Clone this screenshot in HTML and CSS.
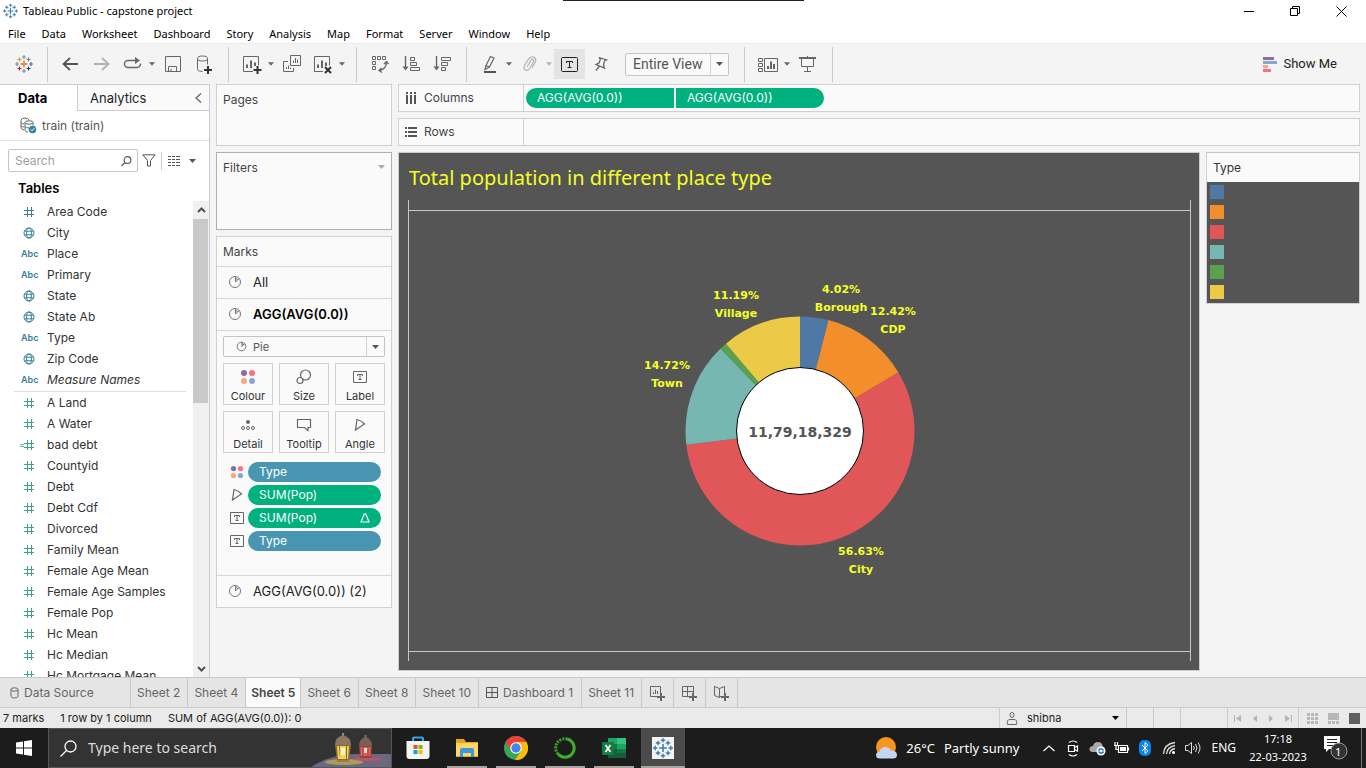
FILE: index.html
```html
<!DOCTYPE html>
<html lang="en">
<head>
<meta charset="utf-8">
<meta name="viewport" content="width=device-width, initial-scale=1">
<title>Tableau Public - capstone project</title>
<link rel="stylesheet" href="styles.css">
</head>
<body>
<svg class="defs" aria-hidden="true">
  <symbol id="caret" viewBox="0 0 7 4"><path d="M0 0h7L3.5 4z" fill="currentColor"/></symbol>
  <symbol id="hash" viewBox="0 0 12 12"><path d="M4.5 1v10M8.500 1v10M1 4.500h10M1 8.500h10" fill="none" stroke="currentColor"/></symbol>
  <symbol id="globe" viewBox="0 0 12 12"><g fill="none" stroke="currentColor"><circle cx="6" cy="6" r="5"/><ellipse cx="6" cy="6" rx="2.4" ry="5"/><path d="M1.5 4.200h9M1.500 7.800h9"/></g></symbol>
  <symbol id="pie" viewBox="0 0 14 14"><g fill="none" stroke="currentColor"><circle cx="7" cy="7" r="5.500"/><path d="M7.500 7V2M7.500 7L11 3.500M7.500 3.500Q9.500 3.500 10 5"/></g></symbol>
  <symbol id="dots" viewBox="0 0 16 16"><circle cx="4" cy="4" r="3" fill="#86719a"/><circle cx="12" cy="4" r="3" fill="#fb7185"/><circle cx="4" cy="12" r="3" fill="#f4a781"/><circle cx="12" cy="12" r="3" fill="#86a8cf"/></symbol>
  <symbol id="label" viewBox="0 0 14 14"><path d="M.5 1.500h13v11H.5zM4.500 6V4.500h5V6M7 4.500v5M5.500 9.500h3" fill="none" stroke="currentColor"/></symbol>
  <symbol id="angle" viewBox="0 0 14 14"><path d="M4 1.500Q8.500 2.500 11.500 6L2.500 12zM4 1.500L2.500 12" fill="none" stroke="currentColor" stroke-width="1.200"/></symbol>
  <symbol id="lens" viewBox="0 0 12 12"><g fill="none" stroke="currentColor" stroke-width="1.100"><circle cx="7.500" cy="5" r="3.400"/><path d="M5 7.500L1.500 11"/></g></symbol>
  <symbol id="plus" viewBox="0 0 8 8"><path d="M4 0v8M0 4h8" stroke="currentColor" stroke-width="2"/></symbol>
  <symbol id="sparkle" viewBox="0 0 18 18"><g fill="none" stroke="#3a7fae" stroke-width="1.200"><path d="M9 5.500v7M5.500 9h7" stroke-width="1.400"/><path d="M9 0v4M7 2h4M9 14v4M7 16h4M2 7v4M0 9h4M16 7v4M14 9h4M4.500 2.500v4M2.500 4.500h4M13.500 2.500v4M11.500 4.500h4M4.500 11.500v4M2.500 13.500h4M13.500 11.500v4M11.500 13.500h4"/></g></symbol>
</svg>

<header>
  <div class="titlebar">
    <svg class="app-icon" width="15" height="16" viewBox="0 0 18 18"><use href="#sparkle"/></svg>
    <span class="title">Tableau Public - capstone project</span>
    <div class="window-buttons">
      <button aria-label="Minimise"><svg width="11" height="11"><path d="M0 5.500h10" stroke="#000"/></svg></button>
      <button aria-label="Restore"><svg width="11" height="11"><path d="M.5 2.500h7v7h-7zM2.500 2.500v-2h7v7h-2" fill="none" stroke="#000"/></svg></button>
      <button aria-label="Close"><svg width="11" height="11"><path d="M.5.5l10 10M10.500.5l-10 10" stroke="#000"/></svg></button>
    </div>
    <span class="window-handle"></span>
  </div>
  <nav class="menubar">
    <button>File</button><button>Data</button><button>Worksheet</button><button>Dashboard</button><button>Story</button><button>Analysis</button><button>Map</button><button>Format</button><button>Server</button><button>Window</button><button>Help</button>
  </nav>
  <div class="toolbar">
    <button class="tool home" aria-label="Start page"><svg width="18" height="18" viewBox="0 0 18 18"><g fill="none" stroke-width="1.200"><path d="M9 5.500v7M5.500 9h7" stroke="#e8762b" stroke-width="1.400"/><path d="M9 0v4M7 2h4" stroke="#7199a6"/><path d="M9 14v4M7 16h4M2 7v4M0 9h4" stroke="#7b85ae"/><path d="M16 7v4M14 9h4" stroke="#5b6591"/><path d="M4.500 2.500v4M2.500 4.500h4" stroke="#eb912b"/><path d="M13.500 2.500v4M11.500 4.500h4" stroke="#59879b"/><path d="M4.500 11.500v4M2.500 13.500h4" stroke="#c72035"/><path d="M13.500 11.500v4M11.500 13.500h4" stroke="#1f447e"/></g></svg></button>
    <div class="tool-group">
      <button class="tool" aria-label="Undo"><svg width="17" height="14"><path d="M8 1L1.500 7 8 13M1.500 7H16" fill="none" stroke="#555" stroke-width="1.800"/></svg></button>
      <button class="tool" aria-label="Redo"><svg width="17" height="14"><path d="M9 1l6.500 6L9 13M15.500 7H1" fill="none" stroke="#b3b3b3" stroke-width="1.800"/></svg></button>
      <button class="tool" aria-label="Replay"><svg width="19" height="14"><path d="M13 3.500H5a3.500 3.500 0 0 0 0 7h9a3.500 3.500 0 0 0 3.500-4" fill="none" stroke="#666" stroke-width="1.400"/><path d="M12 0l5 3.500L12 7z" fill="#666"/></svg></button>
      <svg class="tool-caret" width="6" height="4"><use href="#caret"/></svg>
      <button class="tool" aria-label="Save"><svg width="16" height="16"><path d="M.5.500h15v15H.5zM3.500 15.500v-5h8v5M6 13v2" fill="none" stroke="#666"/></svg></button>
      <button class="tool" aria-label="New data source"><svg width="16" height="19"><g fill="none" stroke="#666"><ellipse cx="6.500" cy="3.500" rx="5" ry="2.500"/><path d="M1.500 3.500v11q1 2 5 2M11.500 3.500v6"/></g><path d="M12 11v8M8 15h8" stroke="#333" stroke-width="2"/></svg></button>
    </div>
    <div class="tool-group">
      <button class="tool" aria-label="New worksheet"><svg width="20" height="19"><path d="M11 16.500H1.500v-15h15v9" fill="none" stroke="#666"/><path d="M5 13V9.500M9 13V5.500M13 11V7.500" stroke="#666" stroke-width="2"/><path d="M15.500 11v8M11.500 15h8" stroke="#333" stroke-width="2"/></svg></button>
      <svg class="tool-caret" width="6" height="4"><use href="#caret"/></svg>
      <button class="tool" aria-label="Duplicate"><svg width="18" height="18"><path d="M7.500.5h10v10h-10zM5 6.500H.5v10h10V13" fill="none" stroke="#666"/><path d="M10.500 8V5.500M12.500 8V3M14.500 8V4.500M3.500 14v-2M5.500 14v-3.500M7.500 14v-1.500" stroke="#666"/></svg></button>
      <button class="tool" aria-label="Clear sheet"><svg width="20" height="19"><path d="M10 16.500H1.500v-15h15v9" fill="none" stroke="#666"/><path d="M5 13V9.500M9 13V5.500M13 11V7.500" stroke="#666" stroke-width="2"/><path d="M12 12l6 6M18 12l-6 6" stroke="#333" stroke-width="2"/></svg></button>
      <svg class="tool-caret" width="6" height="4"><use href="#caret"/></svg>
    </div>
    <div class="tool-group">
      <button class="tool" aria-label="Swap rows and columns"><svg width="18" height="18"><path d="M1.500 1.500h3v3h-3zM6.500 1.500h3v3h-3zM11.500 1.500h3v3h-3zM1.500 6.500h3v3h-3zM1.500 11.500h3v3h-3z" fill="none" stroke="#666"/><path d="M15.500 7q0 7-7 8.500M13 9l2.500-2.500L17.500 9M10.500 13L8 15.500l3 2" fill="none" stroke="#666" stroke-width="1.300"/></svg></button>
      <button class="tool" aria-label="Sort ascending"><svg width="18" height="16"><path d="M3.500 0v12" stroke="#666" stroke-width="1.400"/><path d="M.5 10.500h6l-3 4z" fill="#666"/><path d="M8.500 1.500h4v3h-4zM8.500 6.500h6v3h-6zM8.500 11.500h9v3h-9z" fill="none" stroke="#666"/></svg></button>
      <button class="tool" aria-label="Sort descending"><svg width="18" height="16"><path d="M3.500 0v12" stroke="#666" stroke-width="1.400"/><path d="M.5 10.500h6l-3 4z" fill="#666"/><path d="M8.500 1.500h9v3h-9zM8.500 6.500h6v3h-6zM8.500 11.500h4v3h-4z" fill="none" stroke="#666"/></svg></button>
    </div>
    <div class="tool-group">
      <button class="tool" aria-label="Highlight"><svg width="14" height="19"><path d="M7.500 1.500L11 3 6.500 12 3 10.500zM3 10.500l-1 4 4.500-2.500" fill="none" stroke="#666" stroke-width="1.200"/><path d="M1 17h12" stroke="#555" stroke-width="2"/></svg></button>
      <svg class="tool-caret" width="6" height="4"><use href="#caret"/></svg>
      <button class="tool" aria-label="Group"><svg width="14" height="16"><path d="M4 11l4-7q2-2 3 .5L7 12q-3 4-5.500 1.500-1-2 0-4L6 2.500q3.500-3.500 6.500 0 .8 2-.5 4L9 12" fill="none" stroke="#b3b3b3" stroke-width="1.200"/></svg></button>
      <svg class="tool-caret faded" width="6" height="4"><use href="#caret"/></svg>
      <button class="tool pressed" aria-label="Show mark labels"><svg width="17" height="15"><rect x=".5" y=".5" width="16" height="14" rx="1" fill="none" stroke="#222"/><path d="M5.500 6V4.500h6V6M8.500 4.500v6M6.500 10.500h4" fill="none" stroke="#222"/></svg></button>
      <button class="tool" aria-label="Fix axes"><svg width="14" height="16"><path d="M5 1.500l7.500 2.500-2 1-1 4 1 3L2 8.500l3-1.500 1.500-4zM5.500 10L2 14.500" fill="none" stroke="#666" stroke-width="1.300"/></svg></button>
      <div class="fit"><select aria-label="Fit"><option>Entire View</option></select><span class="drop"><svg width="7" height="4"><use href="#caret"/></svg></span></div>
    </div>
    <div class="tool-group">
      <button class="tool" aria-label="Cards"><svg width="20" height="15"><path d="M.5 1.500h4v3h-4zM.5 6.500h4v3h-4zM.5 11.500h4v3h-4zM6.500 1.500h13v13h-13z" fill="none" stroke="#666"/><path d="M10 12V9M13 12V4.500M16 12V7" stroke="#666" stroke-width="2"/></svg></button>
      <svg class="tool-caret" width="6" height="4"><use href="#caret"/></svg>
      <button class="tool" aria-label="Presentation mode"><svg width="17" height="17"><path d="M0 2h17" stroke="#666" stroke-width="2"/><path d="M2.500 2v8.500h12V2M8.500 0v2M8.500 10.500v5M5 15.500h7" fill="none" stroke="#666"/></svg></button>
    </div>
    <button class="show-me"><svg width="14" height="15"><path d="M0 0h11v3H0z" fill="#86719a"/><path d="M0 4h14v3H0z" fill="#86a8cf"/><path d="M0 8h5v3H0z" fill="#f4a781"/><path d="M0 12h8v3H0z" fill="#fb6f84"/></svg>Show Me</button>
  </div>
</header>

<main>
  <aside class="sidebar">
    <div class="side-tabs">
      <button class="active">Data</button>
      <button>Analytics<svg width="7" height="10"><path d="M6 .5L1 5l5 4.500" fill="none" stroke="#666" stroke-width="1.300"/></svg></button>
    </div>
    <div class="source"><svg width="17" height="17"><g fill="none" stroke="#666"><path d="M9 3Q8 1 5 1T1 3v8q1 2 3 2M1 5.500q1 1.500 3 1.500M1 8.500q1 1.500 3 1.500"/><ellipse cx="9" cy="5.500" rx="4" ry="1.700"/><path d="M5 5.500v8q1 1.500 3 1.500M13 5.500v3M5 9.500q1 1.500 4 1.500"/></g><circle cx="12.500" cy="12.500" r="3.800" fill="#3a82a3"/><path d="M10.800 12.500l1.300 1.300 2.200-2.500" stroke="#fff" fill="none"/></svg>train (train)</div>
    <div class="search-row">
      <label class="search"><input type="text" placeholder="Search" aria-label="Search fields"><svg width="12" height="12"><use href="#lens"/></svg></label>
      <button aria-label="Filter fields"><svg width="14" height="13"><path d="M.8.8h12.400L8.500 6.500V12h-3V6.500z" fill="none" stroke="#555"/></svg></button>
      <button class="view-menu" aria-label="View options"><svg width="12" height="10"><path d="M0 .5h3m1 0h3m1 0h4M0 3.500h3m1 0h3m1 0h4M0 6.500h3m1 0h3m1 0h4M0 9.500h3m1 0h3m1 0h4" stroke="#555"/></svg><svg width="7" height="4"><use href="#caret"/></svg></button>
    </div>
    <h2>Tables</h2>
    <div class="field-area">
      <div class="fields">
        <ul class="dims">
          <li><svg><use href="#hash"/></svg>Area Code</li>
          <li><svg><use href="#globe"/></svg>City</li>
          <li><b>Abc</b>Place</li>
          <li><b>Abc</b>Primary</li>
          <li><svg><use href="#globe"/></svg>State</li>
          <li><svg><use href="#globe"/></svg>State Ab</li>
          <li><b>Abc</b>Type</li>
          <li><svg><use href="#globe"/></svg>Zip Code</li>
          <li><b>Abc</b><i>Measure Names</i></li>
        </ul>
        <ul class="measures">
          <li><svg><use href="#hash"/></svg>A Land</li>
          <li><svg><use href="#hash"/></svg>A Water</li>
          <li class="calc"><svg><use href="#hash"/></svg>bad debt</li>
          <li><svg><use href="#hash"/></svg>Countyid</li>
          <li><svg><use href="#hash"/></svg>Debt</li>
          <li><svg><use href="#hash"/></svg>Debt Cdf</li>
          <li><svg><use href="#hash"/></svg>Divorced</li>
          <li><svg><use href="#hash"/></svg>Family Mean</li>
          <li><svg><use href="#hash"/></svg>Female Age Mean</li>
          <li><svg><use href="#hash"/></svg>Female Age Samples</li>
          <li><svg><use href="#hash"/></svg>Female Pop</li>
          <li><svg><use href="#hash"/></svg>Hc Mean</li>
          <li><svg><use href="#hash"/></svg>Hc Median</li>
          <li><svg><use href="#hash"/></svg>Hc Mortgage Mean</li>
        </ul>
      </div>
      <div class="scrollbar">
        <svg width="9" height="6"><path d="M1 5l3.500-3.500L8 5" fill="none" stroke="#505050" stroke-width="2"/></svg>
        <span class="thumb"></span>
        <svg width="9" height="6"><path d="M1 1l3.500 3.500L8 1" fill="none" stroke="#505050" stroke-width="2"/></svg>
      </div>
    </div>
  </aside>

  <section class="cards">
    <div class="card pages">Pages</div>
    <div class="card filters">Filters<svg width="7" height="4"><use href="#caret"/></svg></div>
    <div class="card marks">
      <h3>Marks</h3>
      <button class="mark-row"><svg width="14" height="14"><use href="#pie"/></svg>All</button>
      <button class="mark-row current"><svg width="14" height="14"><use href="#pie"/></svg>AGG(AVG(0.0))</button>
      <div class="mark-body">
        <div class="mark-type"><svg class="kind" width="11" height="11"><use href="#pie"/></svg><select aria-label="Mark type"><option>Pie</option></select><span class="drop"><svg width="7" height="4"><use href="#caret"/></svg></span></div>
        <div class="shelf-buttons">
          <button><svg width="16" height="16"><use href="#dots"/></svg>Colour</button>
          <button><svg width="16" height="16"><g fill="none" stroke="#666" stroke-width="1.200"><circle cx="9.500" cy="6" r="5"/><circle cx="4" cy="11.500" r="3" fill="#fafafa"/></g></svg>Size</button>
          <button><svg width="14" height="16"><use href="#label"/></svg>Label</button>
          <button><svg width="16" height="16"><circle cx="8" cy="5" r="2" fill="#666"/><g fill="none" stroke="#666"><circle cx="3" cy="11" r="1.500"/><circle cx="8" cy="11" r="1.500"/><circle cx="13" cy="11" r="1.500"/></g></svg>Detail</button>
          <button><svg width="16" height="16"><path d="M1.500 2.500h13v8h-2.500v3l-3.500-3h-7z" fill="none" stroke="#666" stroke-width="1.200"/></svg>Tooltip</button>
          <button><svg width="14" height="16"><use href="#angle"/></svg>Angle</button>
        </div>
        <ul class="encodings">
          <li><svg width="14" height="14"><use href="#dots"/></svg><span class="pill dim">Type</span></li>
          <li><svg width="14" height="14"><use href="#angle"/></svg><span class="pill">SUM(Pop)</span></li>
          <li><svg width="14" height="14"><use href="#label"/></svg><span class="pill">SUM(Pop)<svg width="10" height="10"><path d="M1 9L4.200 1h1.600L9 9z" fill="none" stroke="#fff" stroke-width="1.200"/></svg></span></li>
          <li><svg width="14" height="14"><use href="#label"/></svg><span class="pill dim">Type</span></li>
        </ul>
      </div>
      <button class="mark-row last"><svg width="14" height="14"><use href="#pie"/></svg>AGG(AVG(0.0)) (2)</button>
    </div>
  </section>

  <section class="work">
    <div class="shelf">
      <div class="shelf-name"><svg width="12" height="12"><path d="M2 0v2m0 1v9M6 0v2m0 1v9M10 0v2m0 1v9" stroke="#555" stroke-width="2"/></svg>Columns</div>
      <div class="shelf-pills"><span class="pill first">AGG(AVG(0.0))</span><span class="pill second">AGG(AVG(0.0))</span></div>
    </div>
    <div class="shelf">
      <div class="shelf-name"><svg width="12" height="12"><path d="M0 2h2m1 0h9M0 6h2m1 0h9M0 10h2m1 0h9" stroke="#555" stroke-width="2"/></svg>Rows</div>
    </div>
    <div class="view">
      <div class="viz">
        <h1>Total population in different place type</h1>
        <div class="pane"><div class="pane-inner">
          <svg class="donut" viewBox="-160 -160 320 320" role="img" aria-label="Population share by place type">
            <g fill="none" stroke-width="51" transform="rotate(-90)">
              <circle r="89" pathLength="100" stroke="#4e79a7" stroke-dasharray="4.020 100"/>
              <circle r="89" pathLength="100" stroke="#f28e2b" stroke-dasharray="12.420 100" stroke-dashoffset="-4.020"/>
              <circle r="89" pathLength="100" stroke="#e15759" stroke-dasharray="56.630 100" stroke-dashoffset="-16.440"/>
              <circle r="89" pathLength="100" stroke="#76b7b2" stroke-dasharray="14.720 100" stroke-dashoffset="-73.070"/>
              <circle r="89" pathLength="100" stroke="#59a14f" stroke-dasharray="1.020 100" stroke-dashoffset="-87.790"/>
              <circle r="89" pathLength="100" stroke="#edc948" stroke-dasharray="11.190 100" stroke-dashoffset="-88.810"/>
            </g>
            <circle r="63.500" fill="#fff" stroke="#000"/>
            <g class="slice-labels">
              <text x="41" y="-138">4.02%</text><text x="41" y="-120">Borough</text>
              <text x="93" y="-116">12.42%</text><text x="93" y="-98">CDP</text>
              <text x="-64" y="-132">11.19%</text><text x="-64" y="-114">Village</text>
              <text x="-133" y="-62">14.72%</text><text x="-133" y="-44">Town</text>
              <text x="61" y="124">56.63%</text><text x="61" y="142">City</text>
            </g>
            <text class="total" x="0" y="6">11,79,18,329</text>
          </svg>
        </div></div>
      </div>
      <div class="legend">
        <h3>Type</h3>
        <ul><li class="borough"></li><li class="cdp"></li><li class="city"></li><li class="town"></li><li class="urban"></li><li class="village"></li></ul>
      </div>
    </div>
  </section>
</main>

<nav class="sheets">
  <button class="datasource"><svg width="9" height="12"><g fill="none" stroke="#666"><ellipse cx="4.500" cy="2.500" rx="3.500" ry="1.700"/><path d="M1 2.500v7q1 1.500 3.500 1.500T8 9.500v-7"/></g></svg>Data Source</button>
  <button>Sheet 2</button><button>Sheet 4</button><button class="active">Sheet 5</button><button>Sheet 6</button><button>Sheet 8</button><button>Sheet 10</button>
  <button class="dash"><svg width="12" height="11"><path d="M.5.500h11v10H.5zM6 .5v10M.5 5.500h11" fill="none" stroke="#555"/></svg>Dashboard 1</button>
  <button>Sheet 11</button>
  <button class="new" aria-label="New worksheet"><svg width="16" height="16"><path d="M8 11.500H1.500v-10h10V8" fill="none" stroke="#666"/><path d="M4.500 9V7M6.500 9V4.500M8.500 9V6" stroke="#666"/><use href="#plus" x="8" y="8" width="8" height="8"/></svg></button>
  <button class="new" aria-label="New dashboard"><svg width="16" height="16"><path d="M8 11.500H1.500v-10h11V8M6.500 1.500v10M1.500 6.500h11" fill="none" stroke="#666"/><use href="#plus" x="8" y="8" width="8" height="8"/></svg></button>
  <button class="new" aria-label="New story"><svg width="16" height="16"><path d="M8 11L6.500 12.500 1.500 10.500v-9l5 2 5-2V8M6.500 3.500v9" fill="none" stroke="#666"/><use href="#plus" x="8" y="8" width="8" height="8"/></svg></button>
</nav>

<div class="status">
  <span>7 marks</span><span>1 row by 1 column</span><span class="sum">SUM of AGG(AVG(0.0)): 0</span>
  <button class="user"><svg width="12" height="13"><g fill="none" stroke="#666"><ellipse cx="6" cy="3" rx="2" ry="2.500"/><path d="M1.500 12.500q-1-5 2.500-5h4q3.500 0 2.500 5z"/></g></svg>shibna<svg class="user-caret" width="7" height="4"><use href="#caret"/></svg></button>
  <i class="cell"></i><i class="cell"></i><i class="cell wide"></i>
  <div class="pager">
    <button aria-label="First"><svg width="7" height="7"><path d="M.5 0v7" stroke="#b3b3b3"/><path d="M7 0v7L2 3.500z" fill="#b3b3b3"/></svg></button>
    <button aria-label="Previous"><svg width="4" height="7"><path d="M4 0v7L0 3.500z" fill="#b3b3b3"/></svg></button>
    <button aria-label="Next"><svg width="4" height="7"><path d="M0 0v7l4-3.500z" fill="#b3b3b3"/></svg></button>
    <button aria-label="Last"><svg width="7" height="7"><path d="M6.500 0v7" stroke="#b3b3b3"/><path d="M0 0v7l5-3.500z" fill="#b3b3b3"/></svg></button>
  </div>
  <div class="modes">
    <button aria-label="Show sheet sorter"><svg width="11" height="11"><path d="M0 1.500h3m1 0h3m1 0h3M0 5.500h3m1 0h3m1 0h3M0 9.500h3m1 0h3m1 0h3" stroke="#b8b8b8" stroke-width="3"/></svg></button>
    <button aria-label="Show filmstrip"><svg width="11" height="11"><path d="M0 0h11v7H0zM0 8h3v3H0zM4 8h3v3H4zM8 8h3v3H8z" fill="#b8b8b8"/></svg></button>
    <button aria-label="Show tabs"><svg width="11" height="11"><path d="M0 0h11v11H0z" fill="#606060"/></svg></button>
  </div>
</div>

<footer class="taskbar">
  <button class="start" aria-label="Start"><svg width="16" height="16"><path d="M0 2.500l7-1v6H0zM8 1.300L16 0v7.500H8zM0 8.500h7v6l-7-1zM8 8.500h8V16l-8-1.300z" fill="#fff"/></svg></button>
  <label class="task-search">
    <svg width="17" height="17"><g fill="none" stroke="#fff" stroke-width="1.300"><circle cx="10.500" cy="6.500" r="5.500"/><path d="M6.500 10.500L.5 16.500"/></g></svg>
    <input type="text" placeholder="Type here to search" aria-label="Search Windows">
    <svg class="lanterns" width="80" height="34" viewBox="0 0 80 34">
      <path d="M0 34Q22 20 48 21h32v13z" fill="#6c6880"/><ellipse cx="33" cy="29" rx="19" ry="3" fill="#c9b34a" opacity=".7"/><ellipse cx="56" cy="26" rx="14" ry="2" fill="#d8505c" opacity=".7"/>
      <path d="M32 0v3" stroke="#9a8676" stroke-width="2"/><path d="M24 12q0-8 8-10 8 2 8 10z" fill="#8b7563"/><path d="M24 12h16l-2 16H26z" fill="#8a6a35"/><path d="M26 13h2l1 13h-2zM29 13h6v13h-6zM36 13h2l-1 13h-1z" fill="#fbd04c"/><path d="M30 15h4v7h-4z" fill="#fffbe0"/><path d="M26 28h12" stroke="#9a7a50" stroke-width="2"/>
      <path d="M54.500 2v3" stroke="#86705f" stroke-width="2"/><path d="M48 13q0-7 6.500-9 6.500 2 6.500 9z" fill="#7a6057"/><path d="M48 13h13l-1 12H49z" fill="#8c463e"/><path d="M49.500 14h2v9h-2zM52.500 14h4v9h-4zM57.500 14h2v9h-2z" fill="#ed5c5c"/><path d="M53 15h3v5h-3z" fill="#ffe3c4"/>
    </svg>
  </label>
  <div class="apps">
    <button aria-label="Microsoft Store"><svg width="24" height="24"><path d="M7 6V2.500q0-1 1-1h8q1 0 1 1V6" fill="none" stroke="#2ea7e8" stroke-width="2"/><path d="M.5 5h23v15q0 3-3 3h-17q-3 0-3-3z" fill="#f4f4f4"/><path d="M7.500 9h4v4h-4z" fill="#f25022"/><path d="M12.500 9h4v4h-4z" fill="#7fba00"/><path d="M7.500 14h4v4h-4z" fill="#00a4ef"/><path d="M12.500 14h4v4h-4z" fill="#ffb900"/></svg></button>
    <button class="open" aria-label="File Explorer"><svg width="22" height="20"><path d="M0 1h8l2 3h12v15H0z" fill="#e8a613"/><path d="M0 5h22v13H0z" fill="#ffd766"/><path d="M4 19v-7q0-2 2-2h10q2 0 2 2v7h-3v-4H7v4z" fill="#3a97dd"/></svg></button>
    <button class="open" aria-label="Google Chrome"><svg width="24" height="24" viewBox="-12 -12 24 24"><circle r="12" fill="#34a853"/><path d="M0-6h10.400A12 12 0 0 1-1 12L5 3z" fill="#fbbc05"/><path d="M-10.400-6A12 12 0 0 1 10.400-6H0L-5 3z" fill="#ea4335"/><circle r="5.800" fill="#fff"/><circle r="4.700" fill="#4285f4"/></svg></button>
    <button class="open" aria-label="Anaconda"><svg width="22" height="22" viewBox="-11 -11 22 22"><path d="M2-9A9.200 9.200 0 1 1-7 6" fill="none" stroke="#43b02a" stroke-width="3"/><path d="M-7 6A9.200 9.200 0 0 1 2-9" fill="none" stroke="#3d9c2a" stroke-width="3" stroke-dasharray="2 1"/></svg></button>
    <button class="open" aria-label="Excel"><svg width="24" height="22"><path d="M6 1h18v20H6z" fill="#185c37"/><path d="M6 1h9v7H6z" fill="#21a366"/><path d="M15 1h9v6h-9z" fill="#33c481"/><path d="M15 7h9v5h-9z" fill="#21a366"/><path d="M6 7h9v5H6zM15 12h9v4h-9z" fill="#107c41"/><path d="M0 5h12v13H0z" fill="#107c41"/><path d="M3.500 8l5 7M8.500 8l-5 7" stroke="#fff" stroke-width="1.800"/></svg></button>
    <button class="open focused" aria-label="Tableau"><svg width="22" height="22"><path d="M0 0h22v22H0z" fill="#f4f4f4"/><use href="#sparkle" x="1" y="1" width="20" height="20"/></svg></button>
  </div>
  <div class="tray">
    <button class="weather"><svg width="24" height="24"><circle cx="11" cy="11" r="10" fill="#f7951d"/><path d="M5 22.500q-4 0-4-3.500 0-3 3.500-3.500Q6 10.500 11 11q4 .5 5 3.500 6 0 6 4.500 0 3.500-4 3.500z" fill="#c5d6f2"/></svg>26°C<span>Partly sunny</span></button>
    <button class="tray-icon" aria-label="Show hidden icons"><svg width="12" height="7"><path d="M.5 6L6 1l5.500 5" fill="none" stroke="#fff" stroke-width="1.200"/></svg></button>
    <button class="tray-icon" aria-label="Meet now"><svg width="12" height="17"><path d="M1.500 5.500h6v6h-6zM7.500 7.500l3-1.500v5l-3-1.500M2 2.500q4-3 8 0M2 14.500q4 3 8 0" fill="none" stroke="#fff" stroke-width="1.200"/></svg></button>
    <button class="tray-icon" aria-label="OneDrive"><svg width="17" height="15"><path d="M3 11q-3-1-2.500-3.500Q1 5 4 5q1-4 5-4 4 0 4.500 4Q16 6 16 9l-3 2z" fill="#a8a8a8"/><circle cx="12" cy="10" r="4.500" fill="#fff"/><path d="M9.500 9.500q2-3.500 5 0M14.500 10.500q-2 3.500-5 0" fill="none" stroke="#1b74c4" stroke-width="1.600"/></svg></button>
    <button class="tray-icon" aria-label="Battery"><svg width="17" height="13"><path d="M5.500 3.500h9v7h-9zM15.500 5.500v3M2 0v3M4.500 0v3M1 3.500h4M3 3v4.500h2" fill="none" stroke="#fff" stroke-width="1.200"/><path d="M7 5h6v4H7z" fill="#fff"/></svg></button>
    <button class="tray-icon" aria-label="Bluetooth"><svg width="12" height="16"><rect width="12" height="16" rx="5" fill="#0a84e8"/><path d="M3 5l6 6-3 2.500v-11L9 5l-6 6" fill="none" stroke="#fff"/></svg></button>
    <button class="tray-icon" aria-label="Wi-Fi"><svg width="14" height="14"><path d="M1.500 13Q2 3 13 1.500M4.500 13Q5 6 13 4.500M7.500 13Q8 8.500 13 7.500" fill="none" stroke="#ddd" stroke-width="1.300"/><circle cx="11.500" cy="11.500" r="1.500" fill="#fff"/></svg></button>
    <button class="tray-icon" aria-label="Volume"><svg width="16" height="14"><path d="M.5 4.500h2.500l3.500-3v11l-3.500-3H.5zM8.500 5q1.500 2 0 4M10.500 3q3 4 0 8M13 1.500q4 5.500 0 11" fill="none" stroke="#ddd"/></svg></button>
    <button class="lang">ENG</button>
    <button class="clock"><span>17:18</span><span>22-03-2023</span></button>
    <button class="notes" aria-label="Notifications"><svg width="25" height="24"><path d="M1 0h16v13H6l-3 3v-3H1z" fill="#fff"/><path d="M4 3.500h10M4 6.500h10M4 9.500h7" stroke="#222"/><circle cx="16" cy="15" r="8" fill="#333" stroke="#999"/></svg><span class="badge">1</span></button>
  </div>
</footer>
</body>
</html>
```
FILE: styles.css
```css
* { box-sizing: border-box; }
body {
  margin: 0;
  height: 100vh;
  display: flex;
  flex-direction: column;
  overflow: hidden;
  background: #f4f4f4;
  color: #333;
  font: 12px/16px Inter, "Liberation Sans", sans-serif;
}
button, input, select { font: inherit; color: inherit; border: 0; background: none; padding: 0; margin: 0; }
button { display: flex; align-items: center; justify-content: center; white-space: nowrap; }
ul { list-style: none; margin: 0; padding: 0; }
h1, h2, h3 { margin: 0; font-weight: 400; }
svg { flex: none; display: block; }
select { appearance: none; outline: 0; }
input { outline: 0; min-width: 0; }
.defs { position: absolute; width: 0; height: 0; }

/* Window chrome */
header { flex: none; }
.titlebar, .menubar { background: #fff; color: #000; font-family: "Noto Sans", "Open Sans", sans-serif; font-size: 11px; }
.titlebar { position: relative; display: flex; align-items: center; height: 24px; padding: 0 2px 2px 3px; }
.app-icon { margin-right: 5px; }
.window-buttons { display: flex; margin-left: auto; }
.window-buttons button { width: 46px; height: 20px; }
.window-handle { position: absolute; left: 563px; top: 0; width: 241px; height: 1px; background: #222; }
.menubar { display: flex; height: 19px; padding-left: 8px; gap: 16px; }

/* Toolbar */
.toolbar { display: flex; align-items: center; height: 41px; border-top: 1px solid #ececec; color: #666; }
.tool { width: 31px; height: 30px; }
.tool.home { width: 47px; }
.tool-group { display: flex; align-items: center; height: 35px; border-left: 1px solid #ccc; padding: 0 9px 0 7px; }
.tool-group:last-of-type { border-right: 1px solid #ccc; }
.tool-caret { margin: 0 2px 0 1px; }
.tool-caret.faded { color: #b3b3b3; }
.tool.pressed { background: #e4e4e4; }
.fit, .mark-type { position: relative; display: flex; border: 1px solid #c4c4c4; border-radius: 2px; background: #fafafa; }
.fit { width: 104px; height: 23px; margin: 0 6px 0 9px; font: 14px/20px Roboto, sans-serif; color: #555; }
.fit select { width: 100%; padding-left: 7px; }
.drop { position: absolute; right: 0; top: 0; bottom: 0; width: 18px; border-left: 1px solid #d4d4d4; display: grid; place-items: center; color: #555; pointer-events: none; }
.show-me { margin: 0 29px 0 auto; gap: 6px; font: 13px/20px Roboto, sans-serif; color: #222; }

/* Main area */
main { flex: 1; min-height: 0; display: grid; grid-template-columns: 210px 176px minmax(0, 1fr); gap: 6px; padding-right: 6px; }
.sidebar { min-height: 0; display: flex; flex-direction: column; background: #fff; border: solid #ccc; border-width: 1px 1px 0 0; }
.side-tabs { flex: none; display: grid; grid-template-columns: 77px 1fr; height: 26px; font-size: 13px; line-height: 20px; color: #222; }
.side-tabs button { justify-content: space-between; padding: 0 7px 0 12px; background: #fafafa; border: solid #ccc; border-width: 0 0 1px 1px; }
.side-tabs .active { padding-left: 18px; background: #fff; border: 0; color: #000; font-weight: 700; }
.source { flex: none; display: flex; align-items: center; gap: 5px; height: 30px; padding-left: 20px; border-bottom: 1px solid #ddd; color: #555; }
.search-row { flex: none; display: flex; align-items: center; height: 39px; padding: 0 12px 0 8px; color: #555; }
.search { display: flex; align-items: center; width: 130px; height: 23px; padding: 0 5px 0 6px; border: 1px solid #c4c4c4; border-radius: 2px; margin-right: 4px; }
.search input { flex: 1; }
.search input::placeholder { color: #a0a0a0; opacity: 1; }
.view-menu { height: 18px; margin-left: 5px; padding-left: 6px; border-left: 1px solid #ccc; gap: 9px; }
.sidebar h2 { flex: none; height: 21px; padding-left: 18px; font-size: 13px; line-height: 16px; font-weight: 600; color: #000; }
.field-area { flex: 1; min-height: 0; display: flex; }
.fields { flex: 1; min-width: 0; overflow: hidden; }
.fields li { display: flex; align-items: center; height: 21px; padding-left: 23px; white-space: nowrap; }
.fields li > svg { width: 12px; height: 12px; margin-right: 12px; }
.fields li > b { width: 26px; margin-left: -2px; font-size: 9px; font-weight: 600; }
.dims > li > svg, .dims > li > b { color: #3a7f99; }
.measures { margin: 1px 7px 0 14px; border-top: 1px solid #ddd; }
.fields .measures li { padding-left: 9px; }
.measures li > svg { color: #3fa37c; }
.fields .measures .calc { padding-left: 5px; }
.calc::before { content: "="; width: 4px; font-size: 9px; color: #3fa37c; }
.scrollbar { width: 16px; display: flex; flex-direction: column; align-items: stretch; background: #f0f0f0; padding: 6px 0 5px; }
.scrollbar svg { align-self: center; }
.scrollbar .thumb { flex: 0 1 184px; margin: 6px 1px auto 0; background: #c9c9c9; }

/* Cards column */
.cards { display: flex; flex-direction: column; gap: 6px; }
.card, .shelf { background: #fafafa; border: 1px solid #d0d0d0; color: #444; }
.pages { height: 62px; padding: 7px 6px; }
.filters { display: flex; justify-content: space-between; height: 78px; padding: 7px 6px; border-color: #b0b0b0; }
.filters svg { margin-top: 5px; color: #aaa; }
.marks h3 { height: 29px; padding: 7px 6px; font-size: 12px; line-height: 16px; }
.mark-row { width: 100%; height: 32px; justify-content: flex-start; gap: 11px; padding: 0 0 2px 11px; border-top: 1px solid #d8d8d8; font-size: 13px; color: #222; }
.mark-row svg { color: #777; }
.mark-row.current { font-weight: 600; color: #000; }
.mark-body { padding: 5px 6px 24px; border-top: 1px solid #d8d8d8; }
.mark-type { height: 21px; align-items: center; padding-left: 12px; font-size: 11px; color: #555; }
.mark-type select { flex: 1; padding-left: 6px; }
.shelf-buttons { display: grid; grid-template-columns: repeat(3, 1fr); gap: 6px; margin-top: 6px; }
.shelf-buttons button { flex-direction: column; justify-content: flex-end; gap: 3px; height: 42px; border: 1px solid #d0d0d0; font-size: 11px; color: #333; }
.shelf-buttons svg { color: #666; }
.encodings { display: grid; gap: 3px; margin-top: 9px; padding: 0 4px 0 7px; }
.encodings li { display: flex; align-items: center; gap: 4px; color: #666; }
.pill { flex: 1; display: flex; align-items: center; justify-content: space-between; height: 20px; padding: 0 11px; border-radius: 10px; background: #00b180; color: #fff; }
.pill.dim { background: #4996b2; }

/* Shelves */
.work { min-width: 0; display: flex; flex-direction: column; gap: 6px; padding-bottom: 6px; }
.shelf { flex: none; display: flex; height: 28px; }
.shelf-name { display: flex; align-items: center; gap: 7px; width: 125px; padding-left: 6px; border-right: 1px solid #d0d0d0; }
.shelf-pills { display: flex; gap: 2px; padding: 3px 2px; }
.shelf-pills .pill { flex: none; width: 148px; }
.pill.first { border-radius: 10px 0 0 10px; }
.pill.second { border-radius: 0 10px 10px 0; }

/* Visualisation */
.view { flex: 1; min-height: 0; display: grid; grid-template-columns: minmax(0, 1fr) 154px; gap: 6px; align-items: start; }
.viz { height: 100%; min-height: 0; display: flex; flex-direction: column; padding: 9px 8px 9px 9px; background: #555; border: 1px solid #ccc; }
.viz h1 { height: 38px; padding-left: 1px; font: 20px/32px "Noto Sans", sans-serif; color: #f5ff26; }
.pane { flex: 1; min-height: 0; display: flex; padding: 10px 0 9px; border: solid #c8c8c8; border-width: 0 1px; }
.pane-inner { flex: 1; min-width: 0; display: grid; place-items: center; border: solid #c8c8c8; border-width: 1px 0; }
.donut { width: 320px; height: 320px; overflow: visible; font-family: "DejaVu Sans", "Noto Sans", sans-serif; font-weight: 700; text-anchor: middle; }
.slice-labels { font-size: 11px; fill: #f5ff26; }
.total { font-size: 14px; fill: #555; }
.legend { background: #555; border: 1px solid #d0d0d0; border-top-color: #c4c4c4; }
.legend h3 { height: 29px; padding: 7px 6px; background: #fafafa; font-size: 12px; line-height: 16px; }
.legend li { width: 14px; height: 14px; margin: 3px 3px 6px; }
.legend li:last-child { margin-bottom: 4px; }
.borough { background: #4e79a7; }
.cdp { background: #f28e2b; }
.city { background: #e15759; }
.town { background: #76b7b2; }
.urban { background: #59a14f; }
.village { background: #edc948; }

/* Sheet tabs */
.sheets { flex: none; display: flex; height: 31px; background: #e5e5e5; border: solid #c8c8c8; border-width: 1px 0; color: #666; }
.sheets button { padding: 0 7px 0 6px; border-right: 1px solid #c8c8c8; }
.sheets .datasource { width: 131px; justify-content: flex-start; gap: 5px; padding-left: 10px; }
.sheets .dash { gap: 5px; padding: 0 8px 0 7px; }
.sheets .active { padding: 0 5px; background: #fafafa; color: #444; font-weight: 600; }
.sheets .new { width: 32px; }

/* Status bar */
.status { flex: none; display: flex; align-items: center; height: 20px; padding-left: 3px; background: #eaeaea; font-size: 11px; white-space: nowrap; color: #222; }
.status span { margin-right: 16px; }
.sum { flex: 1; }
.status .user { width: 128px; height: 20px; justify-content: flex-start; gap: 9px; padding-left: 6px; border: solid #ccc; border-width: 0 1px; }
.user-caret { margin: 0 7px 0 auto; color: #000; }
.cell { width: 27px; height: 20px; border-right: 1px solid #ccc; }
.cell.wide { width: 47px; }
.pager { display: flex; gap: 12px; width: 71px; height: 20px; justify-content: center; border-right: 1px solid #ccc; }
.modes { display: flex; gap: 10px; padding: 0 6px 0 8px; }

/* Taskbar */
.taskbar { flex: none; display: flex; height: 40px; background: #1c1c1c; color: #fff; font-family: "Noto Sans", sans-serif; }
.start { width: 48px; }
.task-search { flex: 0 1 344px; display: flex; align-items: center; padding-left: 11px; background: #333; border: 1px solid #555; }
.task-search input { flex: 1; padding-left: 11px; font-size: 14px; }
.task-search input::placeholder { color: #ddd; opacity: 1; }
.lanterns { align-self: flex-end; }
.apps { display: flex; gap: 5px; padding-left: 4px; }
.apps button { width: 44px; }
.apps .open { background: linear-gradient(#aaa49c, #aaa49c) center bottom / 40px 2px no-repeat; }
.apps .open.focused { background: linear-gradient(#aaa49c, #aaa49c) center bottom / 44px 2px no-repeat #4b4b4b; }
.tray { flex: 1; display: flex; justify-content: flex-end; padding-right: 4px; }
.weather { gap: 7px; margin-right: 18px; font-size: 13px; }
.weather span { margin-left: 2px; }
.tray-icon { width: 24px; }
.lang { margin: 0 11px 0 6px; }
.clock { flex-direction: column; width: 62px; line-height: 18px; font-size: 11px; }
.notes { position: relative; width: 53px; border-right: 1px solid #777; }
.badge { position: absolute; left: 26px; top: 16px; font-size: 11px; }
```
